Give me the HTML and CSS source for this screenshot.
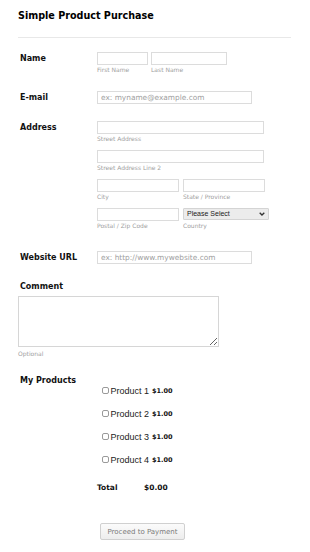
FILE: index.html
```html
<!DOCTYPE html>
<html lang="en">
<head>
  <meta charset="UTF-8">
  <meta name="viewport" content="width=device-width, initial-scale=1.0">
  <title>Simple Product Purchase</title>
  <link rel="stylesheet" href="styles.css">
</head>
<body>

  <form class="form">
    <h1 class="form-title">Simple Product Purchase</h1>
    <hr class="divider">

    <div class="form-row row-name">
      <label class="form-label">Name</label>
      <div class="field">
        <div class="pair">
          <div class="sub-field">
            <input type="text" class="input input-first">
            <span class="sublabel">First Name</span>
          </div>
          <div class="sub-field">
            <input type="text" class="input input-last">
            <span class="sublabel">Last Name</span>
          </div>
        </div>
      </div>
    </div>

    <div class="form-row row-email">
      <label class="form-label">E-mail</label>
      <div class="field">
        <input type="text" class="input input-wide" placeholder="ex: myname@example.com">
      </div>
    </div>

    <div class="form-row row-address">
      <label class="form-label">Address</label>
      <div class="field address">
        <div class="sub-field">
          <input type="text" class="input input-street">
          <span class="sublabel">Street Address</span>
        </div>
        <div class="sub-field">
          <input type="text" class="input input-street">
          <span class="sublabel">Street Address Line 2</span>
        </div>
        <div class="pair gap">
          <div class="sub-field">
            <input type="text" class="input input-half">
            <span class="sublabel">City</span>
          </div>
          <div class="sub-field">
            <input type="text" class="input input-half">
            <span class="sublabel">State / Province</span>
          </div>
        </div>
        <div class="pair gap">
          <div class="sub-field">
            <input type="text" class="input input-half">
            <span class="sublabel">Postal / Zip Code</span>
          </div>
          <div class="sub-field">
            <div class="select-wrap">
              <select class="select">
                <option>Please Select</option>
              </select>
              <svg class="chevron" width="6" height="4" viewBox="0 0 6 4"><path d="M0.7 0.7 L3 3 L5.3 0.7" fill="none" stroke="#333" stroke-width="1.3"/></svg>
            </div>
            <span class="sublabel">Country</span>
          </div>
        </div>
      </div>
    </div>

    <div class="form-row row-website">
      <label class="form-label">Website URL</label>
      <div class="field">
        <input type="text" class="input input-wide" placeholder="ex: http://www.mywebsite.com">
      </div>
    </div>

    <div class="form-block row-comment">
      <label class="form-label">Comment</label>
      <textarea class="textarea"></textarea>
      <span class="sublabel">Optional</span>
    </div>

    <div class="form-row row-products">
      <label class="form-label">My Products</label>
      <div class="field">
        <div class="products">
          <label class="product"><input type="checkbox" class="check">Product 1 <b class="price">$1.00</b></label>
          <label class="product"><input type="checkbox" class="check">Product 2 <b class="price">$1.00</b></label>
          <label class="product"><input type="checkbox" class="check">Product 3 <b class="price">$1.00</b></label>
          <label class="product"><input type="checkbox" class="check">Product 4 <b class="price">$1.00</b></label>
        </div>
        <div class="total">
          <span class="total-label">Total</span>
          <span class="total-value">$0.00</span>
        </div>
        <button type="button" class="pay-button">Proceed to Payment</button>
      </div>
    </div>
  </form>

</body>
</html>
```

FILE: styles.css
```css
body {
  margin: 0;
  padding: 0;
  background-color: #fff;
  font-family: "DejaVu Sans", Verdana, sans-serif;
  color: #111;
}

.form {
  padding: 10px 19px 0 18px;
}

.form-title {
  margin: 0;
  font-size: 9.6px;
  line-height: 12px;
  font-weight: bold;
  color: #000;
}

.divider {
  margin: 14.5px 0 0;
  border: none;
  border-top: 1px solid #e8e8e8;
  height: 0;
}

.form-row {
  display: flex;
  align-items: flex-start;
}

.form-label {
  display: block;
  width: 79px;
  padding-left: 2px;
  box-sizing: border-box;
  flex-shrink: 0;
  font-size: 8px;
  line-height: 13px;
  font-weight: bold;
  color: #111;
}

.field {
  display: flex;
  flex-direction: column;
}

.row-name { margin-top: 14.5px; }
.row-email { margin-top: 16.5px; }
.row-address { margin-top: 17px; }
.row-website { margin-top: 21px; }
.row-comment { margin-top: 16px; }
.row-products { margin-top: 16px; }

.pair {
  display: flex;
  gap: 3px;
}

.pair.gap {
  gap: 4px;
}

.address {
  gap: 7px;
}

.sub-field {
  display: flex;
  flex-direction: column;
}

.input {
  box-sizing: border-box;
  height: 13px;
  margin: 0;
  padding: 0 3px;
  border: 1px solid #dcdcdc;
  border-radius: 0;
  background: #fff;
  font-family: "DejaVu Sans", Verdana, sans-serif;
  font-size: 7.4px;
  color: #333;
  outline: none;
}

.input::placeholder {
  color: #a0a0a0;
}

.input-first { width: 51px; }
.input-last { width: 76px; }
.input-wide { width: 155px; }
.input-street { width: 167px; }
.input-half { width: 82px; }

.sublabel {
  display: block;
  margin-top: 1px;
  font-size: 6px;
  line-height: 8px;
  color: #a0a0a0;
}

.select-wrap {
  position: relative;
  width: 86px;
}

.select {
  -webkit-appearance: none;
  appearance: none;
  display: block;
  box-sizing: border-box;
  width: 86px;
  height: 12px;
  margin: 0 0 1px;
  padding: 0 3px;
  border: 1px solid #d4d4d4;
  border-radius: 1px;
  background: #ececec;
  font-family: "Liberation Sans", Arial, sans-serif;
  font-size: 7px;
  color: #1a1a1a;
}

.chevron {
  position: absolute;
  right: 4px;
  top: 4px;
  pointer-events: none;
}

.form-block {
  display: flex;
  flex-direction: column;
}

.textarea {
  box-sizing: border-box;
  width: 201px;
  height: 51px;
  margin: 3px 0 0;
  border: 1px solid #d6d6d6;
  border-radius: 0;
  resize: both;
}

.row-comment .sublabel {
  margin-top: 3px;
}

.products {
  display: flex;
  flex-direction: column;
  gap: 11px;
  padding: 11px 0 0 5px;
}

.product {
  display: flex;
  align-items: center;
  font-family: "Liberation Sans", Arial, sans-serif;
  font-size: 9px;
  line-height: 12px;
  color: #222;
}

.check {
  -webkit-appearance: none;
  appearance: none;
  box-sizing: border-box;
  width: 7px;
  height: 7px;
  margin: 0 1.5px 0 0;
  border: 1px solid #9a9a9a;
  border-radius: 2px;
  background: #fff;
}

.price {
  margin-left: 3px;
  font-family: "DejaVu Sans", Verdana, sans-serif;
  font-size: 6.5px;
  font-weight: bold;
  color: #111;
}

.total {
  display: flex;
  margin-top: 16.5px;
  font-size: 7.5px;
  line-height: 12px;
  font-weight: bold;
  color: #111;
}

.total-label {
  width: 47px;
}

.pay-button {
  align-self: flex-start;
  box-sizing: border-box;
  width: 85px;
  height: 17px;
  margin: 29px 0 0 3px;
  padding: 0;
  border: 1px solid #d0d0d0;
  border-radius: 2px;
  background: linear-gradient(#fbfbfb, #ededed);
  font-family: "DejaVu Sans", Verdana, sans-serif;
  font-size: 7px;
  color: #7a7a7a;
  cursor: pointer;
}
```
